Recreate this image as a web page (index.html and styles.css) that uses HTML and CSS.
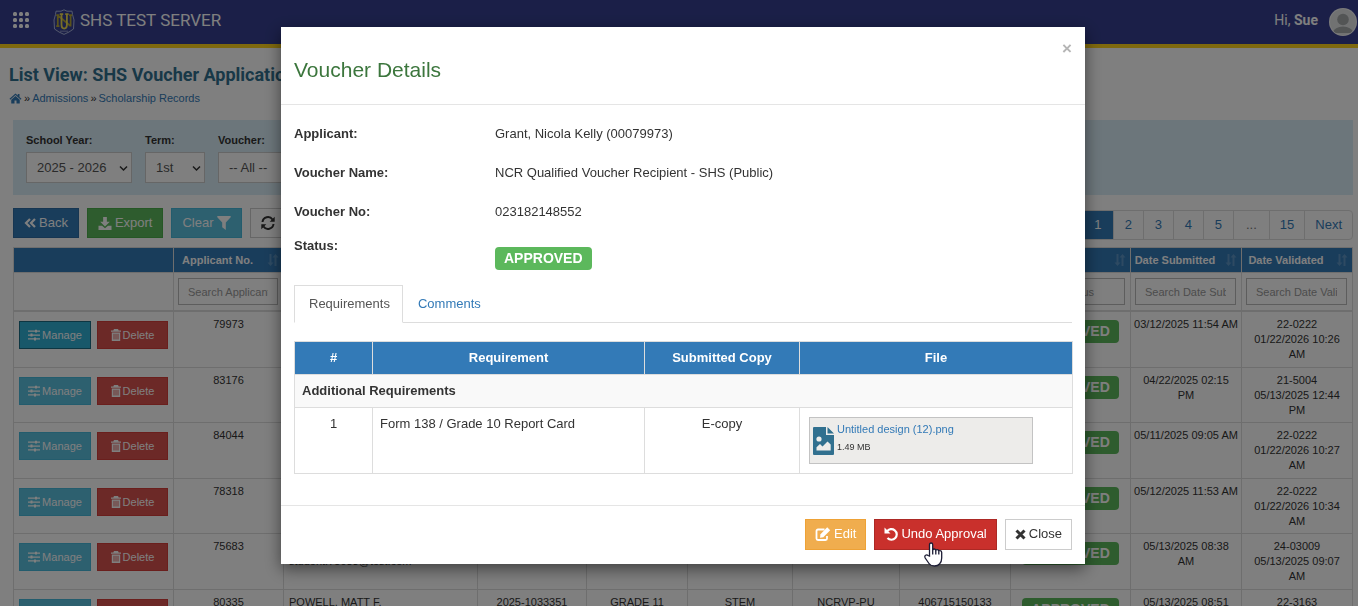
FILE: index.html
```html
<!DOCTYPE html>
<html lang="en">
<head>
<meta charset="utf-8">
<title>SHS Voucher Applications</title>
<link rel="stylesheet" href="styles.css">
</head>
<body>
<svg class="sprite" aria-hidden="true">
  <symbol id="i-home" viewBox="0 0 26 22"><path d="M13 1 1 11.500l1.500 1.800L13 4.200l10.500 9.100 1.500-1.800-4-3.500V2h-3.500v3zM13 6l-8.500 7.300V21H11v-6h4v6h6.500v-7.700z"/></symbol>
  <symbol id="i-back" viewBox="0 0 12 10"><path d="M6 1 2 5 6 9M11 1 7 5 11 9" fill="none" stroke="currentColor" stroke-width="2.200"/></symbol>
  <symbol id="i-download" viewBox="0 0 14 14"><path d="M5 0h4v5h3.200L7 10.200 1.800 5H5zM0 9.500h3.800L7 12.200l3.200-2.700H14V14H0z"/></symbol>
  <symbol id="i-filter" viewBox="0 0 14 14"><path d="M.3 0h13.400v1.200L8.800 6.500V14L5.200 11.200V6.500L.3 1.200z"/></symbol>
  <symbol id="i-refresh" viewBox="0 0 14 14"><path d="M1.500 6A5.500 5.500 0 0 1 11.500 3.500M12.500 8A5.500 5.500 0 0 1 2.500 10.500" fill="none" stroke="currentColor" stroke-width="2"/><path d="M13.700.8v5H8.700zM.3 13.200v-5h5z"/></symbol>
  <symbol id="i-sliders" viewBox="0 0 12 12"><path d="M0 1.500h12v1.300H0zM0 5.400h12v1.300H0zM0 9.300h12v1.300H0zM7 .7h2V3.600H7zM2.500 4.600h2v2.900h-2zM6 8.500h2v2.900H6z"/></symbol>
  <symbol id="i-trash" viewBox="0 0 10 12"><path d="M3 0h4l.7 1.400H10v1.400H0V1.400h2.300zM.8 3.400h8.400V12H.8z"/><path d="M3 4.800v5.700M5 4.800v5.700M7 4.800v5.700" stroke="#d9534f" stroke-width=".9"/></symbol>
  <symbol id="i-sort" viewBox="0 0 12 12"><path d="M2.500 0h2v8.500H6.500L3.500 12 .5 8.500h2zM7.500 12h2V3.500h2L8.500 0l-3 3.500h2z"/></symbol>
  <symbol id="i-chevron" viewBox="0 0 9 7"><path d="M1 1.500l3.500 3.500L8 1.500" fill="none" stroke="currentColor" stroke-width="1.500"/></symbol>
</svg>

<header class="topbar">
  <button class="apps" aria-label="Apps"><svg width="16" height="16" viewBox="0 0 16 16"><g><rect width="4" height="4" rx="1.500"/><rect x="6" width="4" height="4" rx="1.500"/><rect x="12" width="4" height="4" rx="1.500"/><rect y="6" width="4" height="4" rx="1.500"/><rect x="6" y="6" width="4" height="4" rx="1.500"/><rect x="12" y="6" width="4" height="4" rx="1.500"/><rect y="12" width="4" height="4" rx="1.500"/><rect x="6" y="12" width="4" height="4" rx="1.500"/><rect x="12" y="12" width="4" height="4" rx="1.500"/></g></svg></button>
  <svg class="crest" width="22" height="26" viewBox="0 0 22 26"><path d="M11 .8 14 2.200h5l.5 3.300L21 11l-.5 9-4.500 3-5 2.400L6 23l-4.500-3L1 11l1.500-5.500L3 2.200h5z" fill="none" stroke="#aab4dc" stroke-width="1"/><path d="M4.800 6v11.500M17.600 6v11.500M5 6.500 17.500 17M3.200 6.200h3.200M16 6.200h3.200M3.200 17.200h3.200" fill="none" stroke="#b5a535" stroke-width="1.700"/><path d="M8.500 5v10.500q0 4 2.700 4t2.700-4V5M6.800 5.200h3.400M12.200 5.200h3.400" fill="none" stroke="#f0dc50" stroke-width="1.800"/><path d="M7.500 22.200h7" stroke="#aab4dc" stroke-width="1.500" stroke-dasharray="1 1"/></svg>
  <span class="brand">SHS TEST SERVER</span>
  <span class="hello">Hi, <b>Sue</b></span>
  <svg class="avatar" width="28" height="28" viewBox="0 0 28 28"><defs><clipPath id="av"><circle cx="14" cy="14" r="13"/></clipPath></defs><circle cx="14" cy="14" r="14" fill="#f4f4f4"/><g clip-path="url(#av)"><circle cx="14" cy="14" r="13" fill="#e2e4e5"/><circle cx="14" cy="11.500" r="5.800" fill="#a6aaab"/><path d="M3 25q3-6.500 11-6.500T25 25z" fill="#a6aaab"/></g></svg>
</header>

<main>
  <div class="heading">
    <h1>List View: SHS Voucher Applications</h1>
    <nav class="crumbs"><a href="#" aria-label="Home"><svg width="13" height="11"><use href="#i-home"/></svg></a> » <a href="#">Admissions</a> » <a href="#">Scholarship Records</a></nav>
  </div>

  <section class="filters">
    <div class="field"><label for="sy">School Year:</label><div class="pick"><select id="sy" class="w-year"><option>2025 - 2026</option></select><svg width="9" height="7"><use href="#i-chevron"/></svg></div></div>
    <div class="field"><label for="term">Term:</label><div class="pick"><select id="term" class="w-term"><option>1st</option></select><svg width="9" height="7"><use href="#i-chevron"/></svg></div></div>
    <div class="field"><label for="vou">Voucher:</label><div class="pick"><select id="vou" class="w-voucher"><option>-- All --</option></select><svg width="9" height="7"><use href="#i-chevron"/></svg></div></div>
  </section>

  <div class="tools">
    <div class="actions">
      <button class="btn primary"><svg width="12" height="10"><use href="#i-back"/></svg>Back</button>
      <button class="btn success"><svg width="14" height="13"><use href="#i-download"/></svg>Export</button>
      <button class="btn info">Clear<svg width="14" height="14"><use href="#i-filter"/></svg></button>
      <button class="btn plain" aria-label="Refresh"><svg width="14" height="14"><use href="#i-refresh"/></svg></button>
    </div>
    <nav class="pages"><a href="#" class="on">1</a><a href="#">2</a><a href="#">3</a><a href="#">4</a><a href="#">5</a><span>...</span><a href="#">15</a><a href="#">Next</a></nav>
  </div>

  <table class="list">
    <colgroup><col class="c-act"><col class="c-no"><col class="c-name"><col class="c-ref"><col class="c-grade"><col class="c-strand"><col class="c-type"><col class="c-vno"><col class="c-status"><col class="c-date"><col class="c-date"></colgroup>
    <thead>
      <tr><th></th><th>Applicant No.<svg width="12" height="12"><use href="#i-sort"/></svg></th><th></th><th></th><th></th><th></th><th></th><th></th><th>Status<svg width="12" height="12"><use href="#i-sort"/></svg></th><th>Date Submitted<svg width="12" height="12"><use href="#i-sort"/></svg></th><th>Date Validated<svg width="12" height="12"><use href="#i-sort"/></svg></th></tr>
      <tr class="search"><td></td><td><input aria-label="Applicant No." placeholder="Search Applicant No."></td><td></td><td></td><td></td><td></td><td></td><td></td><td><input aria-label="Status" placeholder="Search Status"></td><td><input aria-label="Date Submitted" placeholder="Search Date Submitted"></td><td><input aria-label="Date Validated" placeholder="Search Date Validated"></td></tr>
    </thead>
    <tbody>
      <tr><td class="act"><button class="sm manage hover"><svg width="12" height="12"><use href="#i-sliders"/></svg>Manage</button><button class="sm delete"><svg width="10" height="12"><use href="#i-trash"/></svg>Delete</button></td><td>79973</td><td></td><td></td><td></td><td></td><td></td><td></td><td class="st"><span class="badge">APPROVED</span></td><td>03/12/2025 11:54 AM</td><td>22-0222<br>01/22/2026 10:26<br>AM</td></tr>
      <tr><td class="act"><button class="sm manage"><svg width="12" height="12"><use href="#i-sliders"/></svg>Manage</button><button class="sm delete"><svg width="10" height="12"><use href="#i-trash"/></svg>Delete</button></td><td>83176</td><td></td><td></td><td></td><td></td><td></td><td></td><td class="st"><span class="badge">APPROVED</span></td><td>04/22/2025 02:15<br>PM</td><td>21-5004<br>05/13/2025 12:44<br>PM</td></tr>
      <tr><td class="act"><button class="sm manage"><svg width="12" height="12"><use href="#i-sliders"/></svg>Manage</button><button class="sm delete"><svg width="10" height="12"><use href="#i-trash"/></svg>Delete</button></td><td>84044</td><td></td><td></td><td></td><td></td><td></td><td></td><td class="st"><span class="badge">APPROVED</span></td><td>05/11/2025 09:05 AM</td><td>22-0222<br>01/22/2026 10:27<br>AM</td></tr>
      <tr><td class="act"><button class="sm manage"><svg width="12" height="12"><use href="#i-sliders"/></svg>Manage</button><button class="sm delete"><svg width="10" height="12"><use href="#i-trash"/></svg>Delete</button></td><td>78318</td><td></td><td></td><td></td><td></td><td></td><td></td><td class="st"><span class="badge">APPROVED</span></td><td>05/12/2025 11:53 AM</td><td>22-0222<br>01/22/2026 10:34<br>AM</td></tr>
      <tr><td class="act"><button class="sm manage"><svg width="12" height="12"><use href="#i-sliders"/></svg>Manage</button><button class="sm delete"><svg width="10" height="12"><use href="#i-trash"/></svg>Delete</button></td><td>75683</td><td class="name"><br>student.75683@test.com</td><td></td><td></td><td></td><td></td><td></td><td class="st"><span class="badge">APPROVED</span></td><td>05/13/2025 08:38<br>AM</td><td>24-03009<br>05/13/2025 09:07<br>AM</td></tr>
      <tr><td class="act"><button class="sm manage"><svg width="12" height="12"><use href="#i-sliders"/></svg>Manage</button><button class="sm delete"><svg width="10" height="12"><use href="#i-trash"/></svg>Delete</button></td><td>80335</td><td class="name">POWELL, MATT F.</td><td>2025-1033351</td><td>GRADE 11</td><td>STEM</td><td>NCRVP-PU</td><td>406715150133</td><td class="st"><span class="badge">APPROVED</span></td><td>05/13/2025 08:51<br>AM</td><td>22-3163<br>05/13/2025</td></tr>
    </tbody>
  </table>
</main>

<div class="backdrop">
  <div class="modal" role="dialog" aria-labelledby="mt">
    <div class="m-head"><h2 id="mt">Voucher Details</h2><button class="x" aria-label="Dismiss">×</button></div>
    <div class="m-body">
      <dl class="facts">
        <dt>Applicant:</dt><dd>Grant, Nicola Kelly (00079973)</dd>
        <dt>Voucher Name:</dt><dd>NCR Qualified Voucher Recipient - SHS (Public)</dd>
        <dt>Voucher No:</dt><dd>023182148552</dd>
        <dt class="last">Status:</dt><dd class="last"><span class="badge">APPROVED</span></dd>
      </dl>
      <div class="tabs"><a href="#" class="tab on">Requirements</a><a href="#" class="tab">Comments</a></div>
      <table class="reqs">
        <colgroup><col class="r-num"><col class="r-req"><col class="r-copy"><col class="r-file"></colgroup>
        <thead><tr><th>#</th><th>Requirement</th><th>Submitted Copy</th><th>File</th></tr></thead>
        <tbody>
          <tr class="group"><td colspan="4">Additional Requirements</td></tr>
          <tr><td class="mid">1</td><td>Form 138 / Grade 10 Report Card</td><td class="mid">E-copy</td><td class="filecell">
            <div class="file">
              <svg width="21" height="28" viewBox="0 0 21 28"><path d="M1 0h12v8h8v19a1 1 0 0 1-1 1H1a1 1 0 0 1-1-1V1a1 1 0 0 1 1-1zM14.500 0 21 6.500h-6.500z" fill="#31708f"/><circle cx="6" cy="12" r="2.600" fill="#edecea"/><path d="M3.500 23.500v-3.300L7 17l2.500 2.500 5-5 3.200 3V23.500z" fill="#edecea"/></svg>
              <div class="meta"><a href="#">Untitled design (12).png</a><small>1.49 MB</small></div>
            </div></td></tr>
        </tbody>
      </table>
    </div>
    <div class="m-foot">
      <button class="btn warning"><svg width="16" height="14" viewBox="0 0 15 14"><path d="M9 2.500H2.500a1.500 1.500 0 0 0-1.500 1.500v7.500A1.500 1.500 0 0 0 2.500 13H10a1.500 1.500 0 0 0 1.500-1.500V9" fill="none" stroke="currentColor" stroke-width="1.800"/><path d="M11.700.3 14.700 3.300 7.800 10.200 4.500 10.700 5 7.200z"/></svg>Edit</button>
      <span class="hot"><button class="btn danger"><svg width="14" height="14" viewBox="0 0 14 14"><path d="M3 4.500A5.300 5.300 0 1 1 3.500 11" fill="none" stroke="currentColor" stroke-width="2.200"/><path d="M.5.500v6h6z"/></svg>Undo Approval</button>
      <svg class="pointer" width="19" height="25" viewBox="0 0 19 25"><path d="M5.500 14V2.800q0-1.800 1.600-1.800t1.600 1.800V8q.3-1 1.500-1t1.600 1.300q.4-.8 1.500-.7t1.500 1.400q.5-.6 1.500-.4 1.400.2 1.400 1.900V16q0 4-2.200 6-1.600 2-5 2-3.800 0-5.500-2.500L1.200 16Q.3 14 1.600 13.200t2.500.3z" fill="#fff" stroke="#1d1d35" stroke-width="1.300"/><path d="M8.700 8v4.500M11.800 8.500v4M14.800 9.500v3" stroke="#1d1d35" stroke-width="1.300"/></svg></span>
      <button class="btn plain"><svg width="11" height="11" viewBox="0 0 11 11"><path d="M1.500 1.500l8 8M9.500 1.500l-8 8" stroke="currentColor" stroke-width="3"/></svg>Close</button>
    </div>
  </div>
</div>
</body>
</html>
```

FILE: styles.css
```css
* { box-sizing: border-box; }
body {
  margin: 0;
  height: 100vh;
  overflow: hidden;
  font: 13px/18px "Liberation Sans", Arial, sans-serif;
  color: #333;
  background: #fff;
}
a { color: #337ab7; text-decoration: none; }
svg { fill: currentColor; flex: none; }
button, input, select { font: inherit; color: inherit; margin: 0; }
.sprite { position: absolute; width: 0; height: 0; }

.topbar {
  display: flex;
  align-items: center;
  height: 48px;
  padding: 0 1px 0 13px;
  background: #363f90;
  border-bottom: 4px solid #ffd21c;
  color: #fff;
  font-family: Roboto, sans-serif;
}
.apps { display: flex; padding: 0; border: 0; background: none; margin-right: 24px; }
.apps svg { margin-bottom: 4px; }
.brand { margin-left: 5px; padding-bottom: 4px; font-size: 17px; font-weight: 400; line-height: 24px; }
.hello { margin-left: auto; padding-bottom: 4px; font-size: 14px; }
.avatar { margin-left: 11px; }

.heading { padding: 15px 9px 0; }
h1 { margin: 0; font: 700 18px/24px Roboto, sans-serif; color: #31708f; }
.crumbs { display: flex; align-items: center; gap: 2px; margin-top: 3px; font-size: 11px; line-height: 16px; }
.crumbs a { display: flex; }

.filters {
  display: flex;
  gap: 13px;
  margin: 14px 5px 0 13px;
  padding: 12px 13px;
  background: #d9edf7;
}
.field label { display: block; font-size: 11px; font-weight: 700; line-height: 16px; margin-bottom: 4px; }
.pick { position: relative; }
.pick svg { position: absolute; right: 4px; top: 13px; }
select {
  appearance: none;
  display: block;
  height: 31px;
  padding: 0 10px;
  border: 1px solid #ccc;
  border-radius: 0;
  background: #fff;
  color: #555;
}
.w-year { width: 106px; }
.w-term { width: 60px; }
.w-voucher { width: 160px; }

.tools { display: flex; justify-content: space-between; align-items: flex-end; margin: 13px 5px 0 13px; }
.actions { display: flex; gap: 8px; padding-bottom: 2px; }
.btn {
  display: flex;
  align-items: center;
  gap: 3px;
  padding: 5px 10px 6px;
  border: 1px solid;
  color: #fff;
}
.actions .btn { height: 30px; padding: 0 10px; }
.primary { background: #337ab7; border-color: #2e6da4; }
.success { background: #5cb85c; border-color: #4cae4c; }
.info { background: #5bc0de; border-color: #46b8da; }
.warning { background: #f0ad4e; border-color: #eea236; }
.danger { background: #c9302c; border-color: #ac2925; }
.plain { background: #fff; border-color: #ccc; color: #333; }

.pages { display: flex; border: 1px solid #ddd; border-radius: 0 4px 4px 0; }
.pages > * { min-width: 30px; padding: 5px 10px; border-left: 1px solid #ddd; line-height: 18px; text-align: center; }
.pages span { padding: 5px 12px; color: #777; }
.pages .on { background: #337ab7; color: #fff; border: 0; }

table { border-collapse: collapse; }
.list { table-layout: fixed; width: calc(100% - 18px); margin: 7px 5px 0 13px; font-size: 11px; line-height: 15px; }
.c-act { width: 160px; }
.c-no { width: 110px; }
.c-name { width: 194px; }
.c-ref { width: 109px; }
.c-grade { width: 101px; }
.c-strand { width: 105px; }
.c-type { width: 107px; }
.c-vno { width: 111px; }
.c-status { width: 120px; }
.c-date { width: 111px; }
.list th, .list td { border: 1px solid #ddd; white-space: nowrap; }
.list th { position: relative; height: 25px; padding: 0 23px 0 1px; background: #337ab7; color: #fff; }
.list th svg { position: absolute; right: 4px; top: 6px; opacity: .2; }
.list td { padding: 5px 2px; text-align: center; vertical-align: top; }
.list tbody tr:nth-child(even) td { padding-bottom: 4px; }
.list .search td { height: 38px; padding: 5px 5px 5px 4px; border-bottom-width: 2px; }
.search input {
  display: block;
  width: 100%;
  height: 27px;
  padding: 0 9px;
  border: 1px solid #bbb;
  background: #fff;
}
.search input::placeholder { color: #999; opacity: 1; }
.list .act { padding: 9px 5px 0; text-align: left; }
.list .name { text-align: left; padding-left: 5px; }
.list .st { padding-top: 8px; }
.sm {
  display: inline-flex;
  align-items: center;
  justify-content: center;
  gap: 2px;
  width: 72px;
  height: 28px;
  padding: 0;
  border: 1px solid;
  color: #fff;
  vertical-align: top;
}
.sm + .sm { margin-left: 6px; width: 71px; }
.manage { background: #5bc0de; border-color: #46b8da; }
.manage.hover { background: #31b0d5; border-color: #1b6d85; }
.delete { background: #d9534f; border-color: #d43f3a; }
.badge {
  display: inline-block;
  padding: 0 9px;
  border-radius: 4px;
  background: #5cb85c;
  color: #fff;
  font-size: 14px;
  font-weight: 700;
  line-height: 23px;
}

.backdrop {
  position: fixed;
  inset: 0;
  padding: 27px 0 0 8px;
  background: rgba(0, 0, 0, .5);
}
.modal {
  max-width: 804px;
  margin: 0 auto;
  background: #fff;
  box-shadow: 0 5px 15px rgba(0, 0, 0, .5);
}
.m-head {
  display: flex;
  justify-content: space-between;
  align-items: flex-start;
  padding: 13px 13px 21px;
  border-bottom: 1px solid #e5e5e5;
}
h2 { margin: 16px 0 0; font-size: 21px; font-weight: 400; line-height: 27px; color: #3c763d; }
.x { padding: 0; border: 0; background: none; color: #b5b5b5; font-size: 17px; font-weight: 700; line-height: 18px; }
.m-body { padding: 9px 13px 31px; }
.facts { display: grid; grid-template-columns: 201px 1fr; margin: 0; padding-bottom: 15px; }
.facts dt { font-weight: 700; }
.facts dt, .facts dd { margin: 0; padding: 11px 0 10px; line-height: 18px; }
.facts .last { padding: 6px 0 0; }
.facts dd.last { padding-top: 16px; line-height: 23px; }
.facts .last .badge { display: block; width: fit-content; }
.tabs { display: flex; border-bottom: 1px solid #ddd; }
.tab { padding: 9px 12px 9px 14px; margin-bottom: -1px; border: 1px solid transparent; line-height: 18px; }
.tab.on { border-color: #ddd #ddd #fff; color: #555; }
.reqs { table-layout: fixed; width: 100%; margin-top: 18px; }
.r-num { width: 78px; }
.r-req { width: 272px; }
.r-copy { width: 155px; }
.r-file { width: 273px; }
.reqs th, .reqs td { border: 1px solid #ddd; padding: 7px; line-height: 18px; vertical-align: top; }
.reqs th { background: #337ab7; color: #fff; }
.reqs .mid { text-align: center; }
.group td { background: #f9f9f9; font-weight: 700; }
.reqs .filecell { padding: 9px; }
.file {
  display: flex;
  align-items: center;
  gap: 3px;
  width: 224px;
  height: 47px;
  padding: 0 3px;
  border: 1px solid #c3c3c3;
  background: #edecea;
}
.meta { display: flex; flex-direction: column; align-self: flex-start; padding-top: 2px; font-size: 11px; }
.meta small { font-size: 9px; }
.m-foot {
  display: flex;
  justify-content: flex-end;
  gap: 8px;
  padding: 13px 13px 14px;
  border-top: 1px solid #e5e5e5;
}
.m-foot .btn { padding: 5px 9px 6px; }
.hot { position: relative; }
.pointer { position: absolute; left: 50px; top: 23px; }
```
